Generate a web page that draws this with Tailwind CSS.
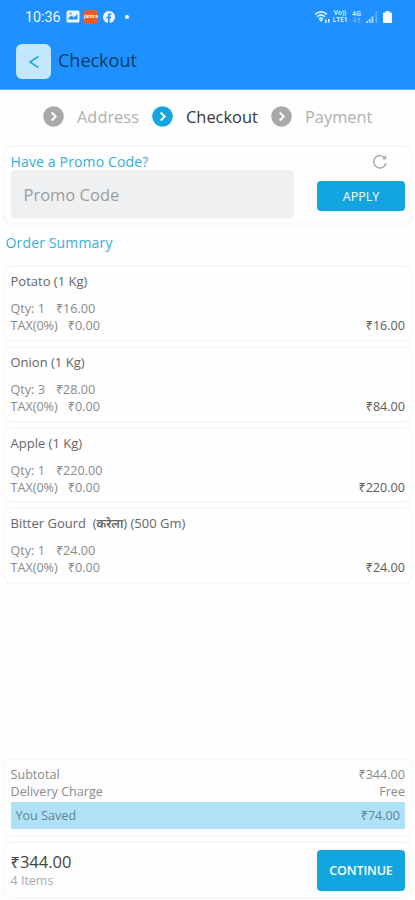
<!DOCTYPE html>
<html lang="en">
<head>
<meta charset="utf-8">
<meta name="viewport" content="width=device-width, initial-scale=1">
<title>Checkout</title>
<script src="https://cdn.jsdelivr.net/npm/@tailwindcss/browser@4"></script>
</head>
<body class="bg-[#fefefe]">
<div class="w-[415px] h-[900px] overflow-hidden flex flex-col font-['Open_Sans','Noto_Sans',sans-serif] text-[12.600px] leading-[17px] text-[#8a8a8a]">
  <header class="h-[90px] shrink-0 bg-[#1e90ff] border-b border-[#5aadff]">
    <div class="h-[33px] pl-[25px] pr-[23px] flex items-center text-white">
      <span class="w-[36px] text-[14.300px] leading-[16px] font-['Roboto',sans-serif] text-white/90 whitespace-nowrap">10:36</span>
      <svg class="ml-[5px] w-[14px] h-[13px]" viewBox="0 0 14 13"><rect x=".5" y=".5" width="13" height="12" rx="1.500" fill="#e8f4ff"/><path d="M2.500 9.500V8l3-2.500 2.500 2 3.500-3.500v5.500z" fill="#1e90ff"/><circle cx="4.500" cy="3.500" r="1" fill="#1e90ff"/></svg>
      <span class="ml-[4px] w-[14px] h-[14px] rounded-[3px] bg-[#f05a1e] flex items-center justify-center text-[4.500px] leading-none font-bold text-white">jantra</span>
      <svg class="ml-[5px] w-[12px] h-[12px]" viewBox="0 0 12 12"><circle cx="6" cy="6" r="6" fill="#f2f8ff"/><path d="M5 12V7.500H3.500V5.800H5V4.600c0-1.500.9-2.300 2.200-2.300h1.200v1.500h-.8c-.6 0-.9.3-.9.900v1.100h1.600l-.3 1.700H6.700V12z" fill="#1e90ff"/></svg>
      <span class="ml-[10px] w-[4px] h-[4px] rounded-full bg-white"></span>
      <div class="ml-auto flex items-center">
        <svg class="w-[17px] h-[14px]" viewBox="0 0 17 14" fill="none" stroke="#e3f1ff" stroke-width="1.600"><path d="M1 4.500Q7 -.7 13 4.500M3 6.700q4-3.300 8 0M5 8.800q2-1.600 4 0"/><path d="M7 12L5 9.500h4z" fill="#e3f1ff" stroke="none"/><path d="M11.800 13V9.500M14.800 9v3.500" stroke-width="1.600"/></svg>
        <div class="ml-[1px] w-[16px] flex flex-col items-center text-[6.500px] leading-[8px] font-bold text-[#d5eaff] whitespace-nowrap"><span>Vo))</span><span class="-mt-px">LTE1</span></div>
        <div class="ml-[3px] w-[11px] flex flex-col items-center text-[#c5e2ff]">
          <span class="text-[7px] leading-[7px] font-bold">4G</span>
          <svg class="w-[8px] h-[6px]" viewBox="0 0 8 6" fill="none" stroke="#7fc0ff" stroke-width="1"><path d="M2 0v5M.5 3.500L2 5l1.500-1.500M6 6V1M4.500 2.500L6 1l1.500 1.500"/></svg>
        </div>
        <svg class="ml-[4px] w-[12px] h-[12px]" viewBox="0 0 12 12"><path d="M0 10h2v2H0zM2.700 8h2v4h-2zM5.400 5.500h2V12h-2z" fill="#a9d4ff"/><path d="M9.500 0h1.700v12H9.500z" fill="#60b0ff"/></svg>
        <svg class="ml-[5px] w-[9px] h-[12px]" viewBox="0 0 9 12"><path d="M2.500 0h4v1.500H8a1 1 0 0 1 1 1V11a1 1 0 0 1-1 1H1a1 1 0 0 1-1-1V2.500a1 1 0 0 1 1-1h1.500z" fill="#f7fbff"/></svg>
      </div>
    </div>
    <div class="pl-[16px] pt-[11px] flex">
      <button class="w-[35px] h-[35px] rounded-[6px] bg-[#c3e7fd] flex items-center justify-center">
        <svg class="w-[12px] h-[14px]" viewBox="0 0 12 14" fill="none" stroke="#18a5d8" stroke-width="1.600"><path d="M10.500 1.300L2 7l8.500 5.700"/></svg>
      </button>
      <h1 class="ml-[7px] mt-[3px] text-[18px] leading-[26px] text-[#0d3c66]">Checkout</h1>
    </div>
  </header>

  <nav class="h-[55px] shrink-0 pl-[43px] pb-[2px] flex items-center text-[16.400px] leading-[22px] text-[#b0b0b0]">
    <svg class="w-[21px] h-[21px] shrink-0" viewBox="0 0 21 21"><circle cx="10.500" cy="10.500" r="10.300" fill="#a9a9a9"/><path d="M8.700 6.500l4 4-4 4" fill="none" stroke="#fff" stroke-width="2"/></svg>
    <span class="ml-[13px] w-[75px] whitespace-nowrap">Address</span>
    <svg class="w-[21px] h-[21px] shrink-0" viewBox="0 0 21 21"><circle cx="10.500" cy="10.500" r="10.300" fill="#12a5df"/><path d="M8.700 6.500l4 4-4 4" fill="none" stroke="#fff" stroke-width="2"/></svg>
    <span class="ml-[13px] w-[85px] whitespace-nowrap text-[#363636]">Checkout</span>
    <svg class="w-[21px] h-[21px] shrink-0" viewBox="0 0 21 21"><circle cx="10.500" cy="10.500" r="10.300" fill="#a9a9a9"/><path d="M8.700 6.500l4 4-4 4" fill="none" stroke="#fff" stroke-width="2"/></svg>
    <span class="ml-[13px] whitespace-nowrap">Payment</span>
  </nav>

  <section class="ml-[3px] mr-[2px] h-[80px] shrink-0 rounded-[8px] border-2 border-[#f8f8f8] pl-[5.500px] pr-[6px] flex justify-between">
    <div>
      <div class="h-[23px] pt-[5px] text-[14px] leading-[20px] tracking-[0.15px] text-[#35aedb]">Have a Promo Code?</div>
      <div class="w-[283px] h-[48px] rounded-[4px] bg-[#eff0f2] pl-[13px] flex items-center text-[16.500px] text-[#9c9c9c]">Promo Code</div>
    </div>
    <div class="w-[88px]">
      <svg class="mt-[7px] ml-[55px] w-[16px] h-[16px]" viewBox="0 0 16 16" fill="none" stroke="#a8a8a8" stroke-width="1.400"><path d="M13.200 4.500A6.200 6.200 0 1 0 14 9"/><path d="M14.200 1v4.300H9.800z" fill="#a8a8a8" stroke="none"/></svg>
      <button class="mt-[11px] w-[88px] h-[30px] rounded-[4px] bg-[#12a5df] text-white text-[12.500px] font-medium">APPLY</button>
    </div>
  </section>

  <h2 class="h-[40px] shrink-0 pl-[5.500px] pt-[8px] text-[14px] leading-[20px] tracking-[0.15px] text-[#35aedb]">Order Summary</h2>

  <main class="ml-[3px] mr-[2px] flex flex-col gap-[4px]">
    <article class="h-[76.750px] shrink-0 rounded-[8px] border-2 border-[#f8f8f8] pl-[5.500px] pr-[6px] pt-[6px]">
      <h3 class="text-[13px] text-[#666]">Potato (1 Kg)</h3>
      <div class="mt-[10px] flex gap-[11px]"><span>Qty: 1</span><span>₹16.00</span></div>
      <div class="flex gap-[10px]"><span>TAX(0%)</span><span>₹0.00</span><span class="ml-auto text-[#5c5c5c]">₹16.00</span></div>
    </article>
    <article class="h-[76.750px] shrink-0 rounded-[8px] border-2 border-[#f8f8f8] pl-[5.500px] pr-[6px] pt-[6px]">
      <h3 class="text-[13px] text-[#666]">Onion (1 Kg)</h3>
      <div class="mt-[10px] flex gap-[11px]"><span>Qty: 3</span><span>₹28.00</span></div>
      <div class="flex gap-[10px]"><span>TAX(0%)</span><span>₹0.00</span><span class="ml-auto text-[#5c5c5c]">₹84.00</span></div>
    </article>
    <article class="h-[76.750px] shrink-0 rounded-[8px] border-2 border-[#f8f8f8] pl-[5.500px] pr-[6px] pt-[6px]">
      <h3 class="text-[13px] text-[#666]">Apple (1 Kg)</h3>
      <div class="mt-[10px] flex gap-[11px]"><span>Qty: 1</span><span>₹220.00</span></div>
      <div class="flex gap-[10px]"><span>TAX(0%)</span><span>₹0.00</span><span class="ml-auto text-[#5c5c5c]">₹220.00</span></div>
    </article>
    <article class="h-[76.750px] shrink-0 rounded-[8px] border-2 border-[#f8f8f8] pl-[5.500px] pr-[6px] pt-[6px]">
      <h3 class="h-[17px] text-[13px] text-[#666] whitespace-pre">Bitter Gourd  (<span class="font-semibold text-[12px]">करेला</span>) (500 Gm)</h3>
      <div class="mt-[10px] flex gap-[11px]"><span>Qty: 1</span><span>₹24.00</span></div>
      <div class="flex gap-[10px]"><span>TAX(0%)</span><span>₹0.00</span><span class="ml-auto text-[#5c5c5c]">₹24.00</span></div>
    </article>
  </main>

  <section class="mt-auto ml-[3px] mr-[2px] h-[79px] shrink-0 rounded-[8px] border-2 border-[#f8f8f8] pl-[5.500px] pr-[6px] pt-[6px]">
    <div class="flex justify-between"><span>Subtotal</span><span>₹344.00</span></div>
    <div class="flex justify-between"><span>Delivery Charge</span><span>Free</span></div>
    <div class="mt-[2px] h-[27px] px-[5px] bg-[#b0e2f7] flex items-center justify-between text-[#5f8494]"><span>You Saved</span><span>₹74.00</span></div>
  </section>

  <footer class="mt-[4px] mb-[1px] ml-[3px] mr-[2px] h-[58px] shrink-0 rounded-[8px] border-2 border-[#f8f8f8] pl-[5.500px] pr-[6px] flex items-center justify-between">
    <div>
      <div class="text-[16.500px] leading-[21px] text-[#444]">₹344.00</div>
      <div class="text-[12.500px] leading-[17px] text-[#aaa]">4 Items</div>
    </div>
    <button class="w-[88px] h-[41px] rounded-[4px] bg-[#12a5df] text-white text-[12.600px] font-semibold tracking-[-0.2px]">CONTINUE</button>
  </footer>
</div>
</body>
</html>
